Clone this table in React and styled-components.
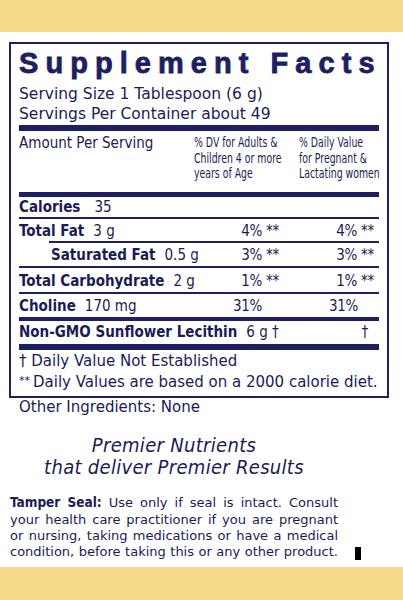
import React from 'react';
import styled, { createGlobalStyle } from 'styled-components';

const NAVY = '#1e1e62';
const INK = '#1b1b55';
const CREAM = '#f6da8c';

const GlobalStyle = createGlobalStyle`
  html, body {
    margin: 0;
    padding: 0;
    background: #fff;
  }
  body {
    font-family: "DejaVu Sans Condensed", "DejaVu Sans", sans-serif;
    color: ${INK};
  }
`;

const Page = styled.div`
  width: 403px;
  height: 600px;
  display: flex;
  flex-direction: column;
  background: #fff;
  overflow: hidden;
`;

const Band = styled.div`
  flex: none;
  height: ${props => props.$h}px;
  background: ${CREAM};
  margin-top: ${props => (props.$bottom ? 'auto' : '0')};
`;

const Panel = styled.div`
  margin: 10px 0 0 9px;
  width: 380px;
  box-sizing: border-box;
  border: 2px solid ${NAVY};
  padding: 3px 8px 3px 8px;
`;

const Title = styled.div`
  font-family: "Liberation Sans", Arial, sans-serif;
  font-weight: 700;
  font-size: 29px;
  line-height: 32px;
  letter-spacing: 7.05px;
  color: ${NAVY};
  white-space: nowrap;
  -webkit-text-stroke: 0.8px ${NAVY};
`;

const ServingBlock = styled.div`
  margin-top: 6px;
  font-family: "DejaVu Sans", sans-serif;
  font-size: 15.5px;
  line-height: 19.5px;
  white-space: nowrap;
`;

const ThickRule = styled.div`
  height: ${props => props.$h}px;
  background: ${NAVY};
  margin-top: ${props => props.$mt || 0}px;
`;

const ThinRule = styled.div`
  height: 2px;
  background: ${NAVY};
  margin-left: ${props => props.$indent || 0}px;
`;

const HeaderRow = styled.div`
  display: grid;
  grid-template-columns: 175px 105px 80px;
  padding: 3px 0 10px;
`;

const HeaderLabel = styled.div`
  font-size: 15px;
  line-height: 19.5px;
`;

const ColumnHead = styled.div`
  font-size: 13.5px;
  line-height: 15.5px;
  padding-top: 1px;
  white-space: nowrap;
  transform: scaleX(0.77);
  transform-origin: left top;
`;

const Row = styled.div`
  display: grid;
  grid-template-columns: 175px 105px 80px;
  align-items: baseline;
  height: ${props => props.$h}px;
  line-height: ${props => props.$h}px;
  font-size: 15px;
  padding-top: ${props => props.$pt || 0}px;
  box-sizing: border-box;
`;

const Name = styled.div`
  white-space: nowrap;
  padding-left: ${props => props.$indent || 0}px;
  grid-column: ${props => (props.$wide ? 'span 2' : 'auto')};

  b {
    font-weight: 700;
  }
  span {
    margin-left: ${props => props.$gap || 9}px;
  }
`;

const Value = styled.div`
  text-align: right;
  white-space: nowrap;
  color: ${INK};
  padding-right: ${props => props.$pr || 0}px;
  letter-spacing: -0.3px;
`;

const Footnotes = styled.div`
  padding-top: 2px;
  font-family: "DejaVu Sans", sans-serif;
  font-size: 15px;
  line-height: 19.6px;
`;

const Footnote = styled.div`
  white-space: nowrap;

  sup {
    font-size: 11px;
    vertical-align: 3px;
    margin-right: 3px;
  }
`;

const Other = styled.div`
  margin: 0 0 0 19px;
  font-family: "DejaVu Sans", sans-serif;
  font-size: 15px;
  line-height: 19.5px;
`;

const TextBlock = styled.div`
  margin: 0 0 0 10px;
  width: 328px;
`;

const Slogan = styled.div`
  margin-top: 17px;
  text-align: center;
  font-size: 20px;
  line-height: 22px;
  letter-spacing: 0.3px;
  font-style: italic;
  color: ${INK};
`;

const SealRow = styled.div`
  display: flex;
  align-items: flex-end;
  gap: 17px;
  margin-top: 16px;
`;

const SealText = styled.div`
  width: 328px;
  margin-left: 10px;
  font-family: "DejaVu Sans", sans-serif;
  font-size: 13px;
  line-height: 16.4px;

  b {
    font-family: "DejaVu Sans Condensed", "DejaVu Sans", sans-serif;
    font-weight: 700;
    font-size: 13.5px;
  }
`;

const SealLine = styled.div`
  text-align: justify;
  text-align-last: justify;
  white-space: nowrap;
`;

const Marker = styled.div`
  width: 6px;
  height: 13px;
  background: #000;
  margin-bottom: 1px;
`;

const nutrients = [
  { name: 'Total Fat', amount: '3 g', v1: '4% **', v2: '4% **', h: 22, pt: 1, rule: 30 },
  { name: 'Saturated Fat', amount: '0.5 g', v1: '3% **', v2: '3% **', h: 23, pt: 1, indent: 32, rule: 0 },
  { name: 'Total Carbohydrate', amount: '2 g', v1: '1% **', v2: '1% **', h: 24, pt: 1, rule: 0 },
];

const App = () => (
  <Page>
    <GlobalStyle />
    <Band $h={32} />
    <Panel>
      <Title>Supplement Facts</Title>
      <ServingBlock>
        <div>Serving Size 1 Tablespoon (6 g)</div>
        <div>Servings Per Container about 49</div>
      </ServingBlock>
      <ThickRule $h={6} $mt={1} />
      <HeaderRow>
        <HeaderLabel>Amount Per Serving</HeaderLabel>
        <ColumnHead>% DV for Adults &amp;<br />Children 4 or more<br />years of Age</ColumnHead>
        <ColumnHead>% Daily Value<br />for Pregnant &amp;<br />Lactating women</ColumnHead>
      </HeaderRow>
      <ThickRule $h={5} />
      <Row $h={20}>
        <Name $gap={14}><b>Calories</b><span>35</span></Name>
      </Row>
      <ThinRule />
      {nutrients.map(n => (
        <React.Fragment key={n.name}>
          <Row $h={n.h} $pt={n.pt}>
            <Name $indent={n.indent}><b>{n.name}</b><span>{n.amount}</span></Name>
            <Value $pr={20}>{n.v1}</Value>
            <Value $pr={5}>{n.v2}</Value>
          </Row>
          <ThinRule $indent={n.rule} />
        </React.Fragment>
      ))}
      <Row $h={23} $pt={1}>
        <Name><b>Choline</b><span>170 mg</span></Name>
        <Value $pr={37}>31%</Value>
        <Value $pr={21}>31%</Value>
      </Row>
      <ThickRule $h={4} />
      <Row $h={23}>
        <Name $wide><b>Non-GMO Sunflower Lecithin</b><span>6 g †</span></Name>
        <Value $pr={11}>†</Value>
      </Row>
      <ThickRule $h={6} />
      <Footnotes>
        <Footnote>† Daily Value Not Established</Footnote>
        <Footnote><sup>**</sup>Daily Values are based on a 2000 calorie diet.</Footnote>
      </Footnotes>
    </Panel>
    <Other>Other Ingredients: None</Other>
    <TextBlock>
      <Slogan>
        Premier Nutrients<br />that deliver Premier Results
      </Slogan>
    </TextBlock>
    <SealRow>
      <SealText>
        <SealLine><b>Tamper Seal:</b> Use only if seal is intact. Consult</SealLine>
        <SealLine>your health care practitioner if you are pregnant</SealLine>
        <SealLine>or nursing, taking medications or have a medical</SealLine>
        <SealLine>condition, before taking this or any other product.</SealLine>
      </SealText>
      <Marker />
    </SealRow>
    <Band $h={33} $bottom />
  </Page>
);

export default App;
